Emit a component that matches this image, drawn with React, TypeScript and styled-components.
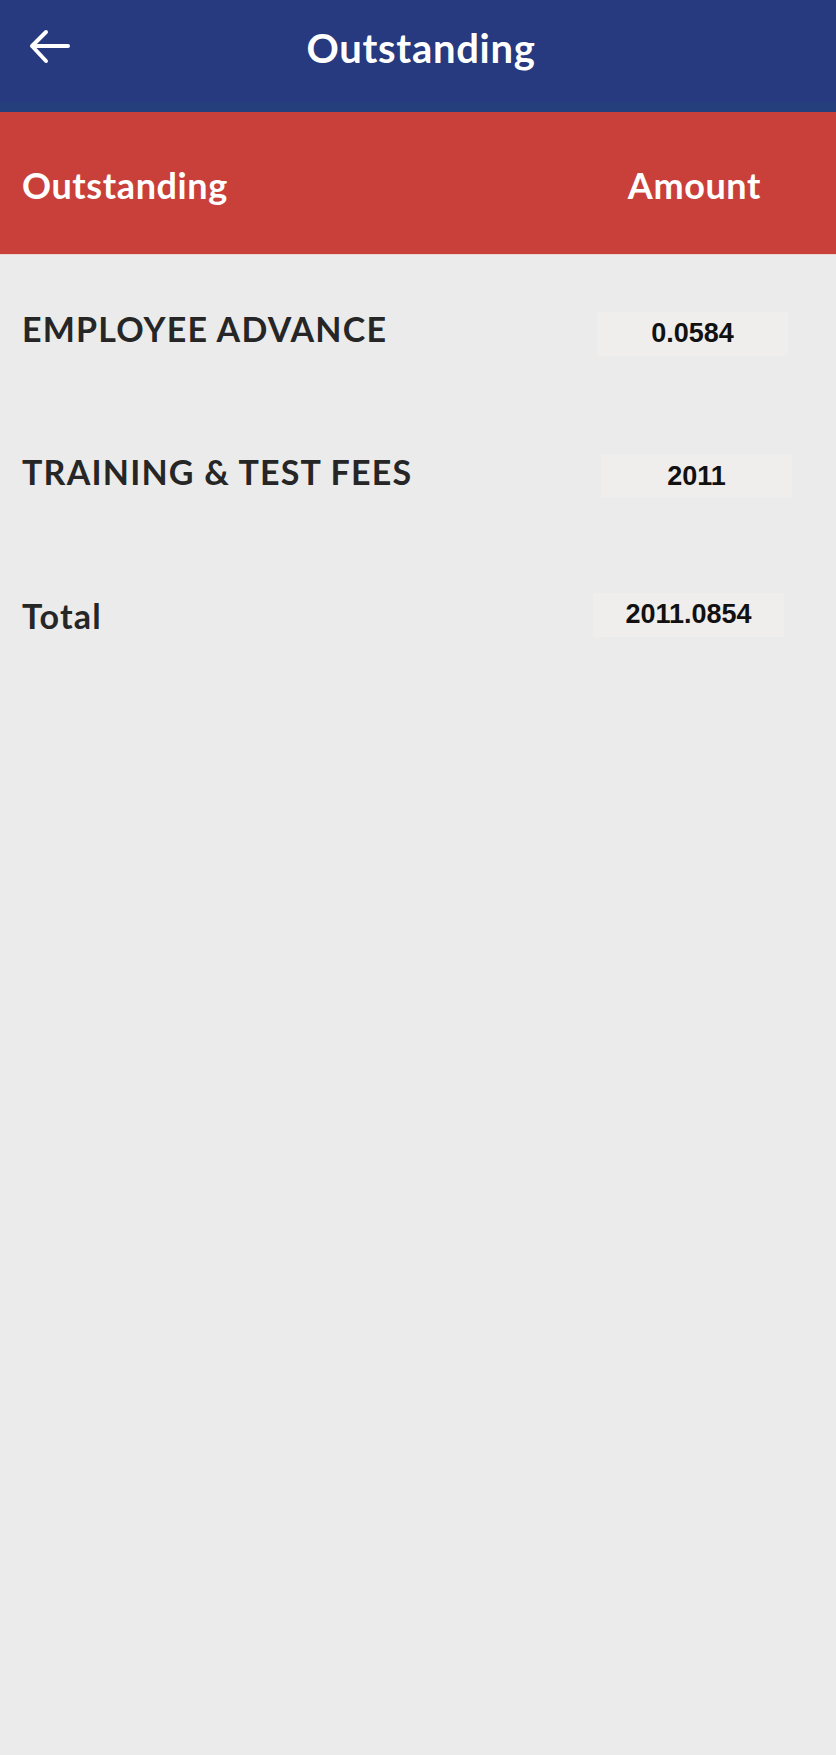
import React from "react";
import styled, { createGlobalStyle } from "styled-components";

const Global = createGlobalStyle`
  html, body { margin: 0; padding: 0; background: #ebebeb; }
  body { font-family: "Lato", "Liberation Sans", sans-serif; }
`;

const Page = styled.div`
  width: 836px;
  min-height: 1755px;
  background: #ebebeb;
  display: flex;
  flex-direction: column;
`;

const TopBar = styled.header`
  height: 102px;
  background: #27397f;
  border-bottom: 10px solid #253f7c;
  display: flex;
  align-items: center;
  position: relative;
  justify-content: center;
`;

const BackButton = styled.button`
  position: absolute;
  left: 26px;
  top: 26px;
  width: 48px;
  height: 42px;
  border: none;
  background: transparent;
  padding: 0;
  display: flex;
  align-items: center;
  justify-content: center;
`;

const Title = styled.h1`
  margin: 0;
  color: #ffffff;
  font-family: "Lato", sans-serif;
  font-weight: 700;
  font-size: 40px;
  letter-spacing: 0.7px;
  line-height: 1;
  padding-bottom: 6px;
  padding-left: 6px;
`;

const TableHead = styled.div`
  height: 143px;
  background: #c9403b;
  display: flex;
  align-items: center;
  justify-content: space-between;
  padding: 4px 75px 0 22px;
  box-sizing: border-box;
  border-bottom: 1px solid #e9d4d3;
`;

const HeadCell = styled.span`
  color: #ffffff;
  font-family: "Lato", sans-serif;
  font-weight: 700;
  font-size: 36px;
  letter-spacing: 0.6px;
  line-height: 1;
`;

const Rows = styled.div`
  display: flex;
  flex-direction: column;
  padding-top: 3px;
`;

const Row = styled.div`
  height: 143.5px;
  display: flex;
  align-items: center;
  justify-content: space-between;
  padding-left: 22px;
`;

const Label = styled.span`
  color: #262626;
  font-family: "Lato", sans-serif;
  font-weight: 700;
  font-size: 34px;
  letter-spacing: 1.2px;
  line-height: 1;
  margin-top: -2px;
`;

const ValueBox = styled.div<{ $right: number; $shift: number }>`
  width: 191px;
  height: 44px;
  margin-right: ${(p) => p.$right}px;
  margin-top: ${(p) => p.$shift}px;
  background: #f0eded;
  display: flex;
  align-items: center;
  justify-content: center;
  color: #111111;
  font-family: "Liberation Sans", Arial, sans-serif;
  font-weight: 700;
  font-size: 27px;
`;

const rows = [
  { label: "EMPLOYEE ADVANCE", value: "0.0584", right: 48, shift: 8 },
  { label: "TRAINING & TEST FEES", value: "2011", right: 44, shift: 6 },
  { label: "Total", value: "2011.0854", right: 52, shift: -4 },
];

export default function App() {
  return (
    <>
      <Global />
      <Page>
        <TopBar>
          <BackButton aria-label="Back">
            <svg width="48" height="42" viewBox="0 0 48 42" fill="none">
              <path
                d="M6 20 H42 M6 20 L20 6 M6 20 L20 35"
                stroke="#ffffff"
                strokeWidth="4"
                strokeLinecap="round"
                strokeLinejoin="round"
              />
            </svg>
          </BackButton>
          <Title>Outstanding</Title>
        </TopBar>
        <TableHead>
          <HeadCell>Outstanding</HeadCell>
          <HeadCell>Amount</HeadCell>
        </TableHead>
        <Rows>
          {rows.map((r) => (
            <Row key={r.label}>
              <Label>{r.label}</Label>
              <ValueBox $right={r.right} $shift={r.shift}>
                {r.value}
              </ValueBox>
            </Row>
          ))}
        </Rows>
      </Page>
    </>
  );
}
